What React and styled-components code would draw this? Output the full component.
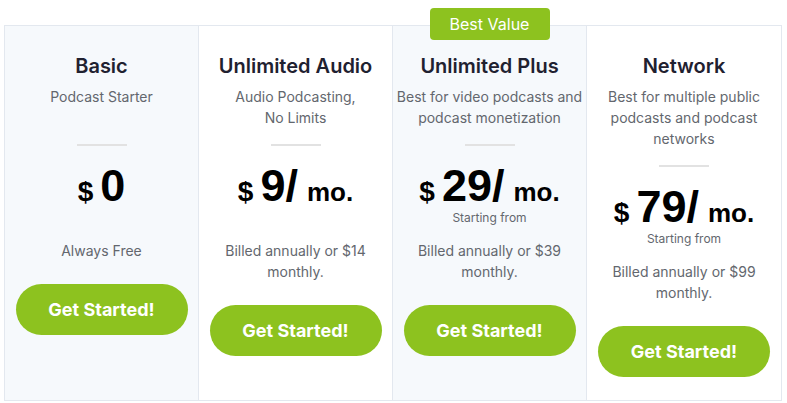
import React from "react";
import styled, { createGlobalStyle } from "styled-components";

const Global = createGlobalStyle`
  html, body { margin: 0; padding: 0; background: #ffffff; }
  body { font-family: Inter, "Noto Sans", sans-serif; }
`;

const Page = styled.div`
  padding: 25px 5px 0 4px;
`;

const Grid = styled.div`
  display: grid;
  grid-template-columns: repeat(4, 1fr);
  border: 1px solid #e3e8ef;
  height: 376px;
  box-sizing: border-box;
`;

const Card = styled.div`
  position: relative;
  display: flex;
  flex-direction: column;
  align-items: center;
  padding: 26px 0 0;
  background: ${(p) => (p.$shaded ? "#f6f9fc" : "#ffffff")};
  border-right: ${(p) => (p.$last ? "none" : "1px solid #e3e8ef")};
  text-align: center;
`;

const Badge = styled.div`
  position: absolute;
  top: -18px;
  left: 50%;
  transform: translateX(-50%);
  width: 120px;
  height: 32px;
  border-radius: 4px;
  background: #8dc21f;
  color: #ffffff;
  font-size: 16px;
  line-height: 32px;
`;

const Title = styled.h3`
  margin: 0;
  font-size: 20px;
  line-height: 28px;
  font-weight: 600;
  color: #1f2130;
`;

const Subtitle = styled.p`
  margin: 6px 0 0;
  min-height: 42px;
  font-size: 14px;
  line-height: 21px;
  color: #63676e;
  white-space: nowrap;
`;

const Divider = styled.hr`
  width: 50px;
  height: 2px;
  border: none;
  background: #e2e2e2;
  margin: 16px 0 0;
`;

const Price = styled.div`
  margin-top: 18px;
  height: 44px;
  display: flex;
  align-items: baseline;
  justify-content: center;
  font-family: "Liberation Sans", Arial, sans-serif;
  font-weight: 700;
  color: #000000;
  line-height: 44px;
`;

const Currency = styled.span`
  font-size: 28px;
  margin-right: 7px;
`;

const Amount = styled.span`
  font-size: 45px;
`;

const Per = styled.span`
  font-size: 26px;
  margin-left: 9px;
`;

const Starting = styled.div`
  margin-top: 2px;
  font-size: 12px;
  line-height: 16px;
  color: #63676e;
  visibility: ${(p) => (p.$show ? "visible" : "hidden")};
`;

const Billed = styled.p`
  margin: 14px 0 0;
  font-size: 14px;
  line-height: 21px;
  color: #63676e;
`;

const Button = styled.button`
  margin-top: 23px;
  width: 172px;
  height: 51px;
  border: none;
  border-radius: 26px;
  background: #8dc21f;
  color: #ffffff;
  font-family: Inter, sans-serif;
  font-size: 18px;
  font-weight: 700;
  cursor: pointer;
`;

const plans = [
  { title: "Basic", sub: ["Podcast Starter"], amount: "0", per: false, starting: false, billed: ["Always Free"], shaded: true },
  { title: "Unlimited Audio", sub: ["Audio Podcasting,", "No Limits"], amount: "9/", per: true, starting: false, billed: ["Billed annually or $14", "monthly."] },
  { title: "Unlimited Plus", sub: ["Best for video podcasts and", "podcast monetization"], amount: "29/", per: true, starting: true, billed: ["Billed annually or $39", "monthly."], shaded: true, badge: "Best Value" },
  { title: "Network", sub: ["Best for multiple public", "podcasts and podcast", "networks"], amount: "79/", per: true, starting: true, billed: ["Billed annually or $99", "monthly."], last: true },
];

const Lines = ({ lines }) =>
  lines.map((l, i) => (
    <React.Fragment key={i}>
      {i > 0 && <br />}
      {l}
    </React.Fragment>
  ));

export default function App() {
  return (
    <>
      <Global />
      <Page>
        <Grid>
          {plans.map((p) => (
            <Card key={p.title} $shaded={p.shaded} $last={p.last}>
              {p.badge && <Badge>{p.badge}</Badge>}
              <Title>{p.title}</Title>
              <Subtitle>
                <Lines lines={p.sub} />
              </Subtitle>
              <Divider />
              <Price>
                <Currency>$</Currency>
                <Amount>{p.amount}</Amount>
                {p.per && <Per>mo.</Per>}
              </Price>
              <Starting $show={p.starting}>Starting from</Starting>
              <Billed>
                <Lines lines={p.billed} />
              </Billed>
              <Button>Get Started!</Button>
            </Card>
          ))}
        </Grid>
      </Page>
    </>
  );
}
